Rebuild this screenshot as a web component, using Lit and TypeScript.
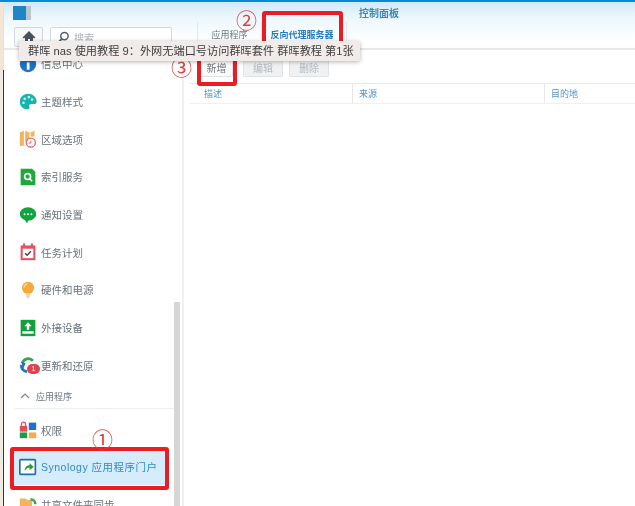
import { LitElement, html, css, svg } from "lit";
import { customElement } from "lit/decorators.js";

const icons: Record<string, unknown> = {
  info: svg`<circle cx="11" cy="11" r="10" fill="#1b74c4"/><rect x="9.500" y="9" width="3.400" height="9" fill="#fff"/>`,
  theme: svg`<path d="M11 1C5 1 1 5.500 1 11s4.500 9 9 9c3 0 3-2 2.500-3.500-.5-2 1-3 3-3h3c2 0 3-1.500 3-3.500C21 5 17 1 11 1z" fill="#16b4ac"/><circle cx="7" cy="7" r="1.600" fill="#cdf2ee"/><circle cx="12" cy="5" r="1.600" fill="#cdf2ee"/><circle cx="16" cy="8" r="1.600" fill="#cdf2ee"/><circle cx="5.500" cy="12" r="1.600" fill="#cdf2ee"/>`,
  region: svg`<path d="M1 3l5-2v18l-5 1zM7.500 1l5 2v7l-5 5zM14 3l5-2v7h-5z" fill="#f6b35f"/><circle cx="14.500" cy="15.500" r="5.500" fill="#fff" stroke="#e2646c" stroke-width="1.600"/><path d="M14.500 13v3h-3" fill="none" stroke="#e2646c" stroke-width="1.200"/>`,
  search: svg`<path d="M2 1h14l4 4v16H2z" fill="#1fa83c"/><circle cx="10.500" cy="10.500" r="3.600" fill="none" stroke="#fff" stroke-width="2"/><path d="M13 13l3 3" stroke="#fff" stroke-width="2"/>`,
  chat: svg`<path d="M11 1.500c5.500 0 10 3.600 10 8.300s-4.500 8.200-10 8.200l-1 3.500-3-4.300C3.500 16 1 13.200 1 9.800 1 5.100 5.500 1.500 11 1.500z" fill="#11a53d"/><circle cx="6.800" cy="10" r="1.200" fill="#fff"/><circle cx="11" cy="10" r="1.200" fill="#fff"/><circle cx="15.200" cy="10" r="1.200" fill="#fff"/>`,
  task: svg`<path d="M2 3h18v18H2z" fill="#e4525f"/><rect x="4.500" y="7" width="13" height="11.500" fill="#fff"/><rect x="5" y="0.500" width="2.400" height="5" fill="#e4525f"/><rect x="14.600" y="0.500" width="2.400" height="5" fill="#e4525f"/><path d="M7.500 12.500l2.500 2.500 4.500-5" fill="none" stroke="#444" stroke-width="1.800"/>`,
  bulb: svg`<circle cx="11" cy="8.500" r="7.500" fill="#f8a93d"/><path d="M8 15h6l-1 3H9z" fill="#f6d08c"/><rect x="9" y="18" width="4" height="3" fill="#d8d8d8"/><path d="M6 8a5 5 0 0 1 4-4.500" stroke="#fcd9a0" stroke-width="1.500" fill="none"/>`,
  device: svg`<rect x="2" y="1" width="18" height="20" fill="#12a03c"/><rect x="4" y="15" width="14" height="3" fill="#fff"/><path d="M11 4l4.500 5h-3v4h-3V9h-3z" fill="#fff"/>`,
  update: svg`<path d="M4 9a7.500 7.500 0 0 1 13-3" fill="none" stroke="#2fa84f" stroke-width="3.400"/><path d="M3 7l2 9 3-7z" fill="#1b74c4"/><path d="M3 11a7 7 0 0 0 7 8" fill="none" stroke="#1b74c4" stroke-width="3.400"/>`,
  perm: svg`<rect x="1" y="6" width="9" height="7" fill="#e84a5a"/><path d="M3 7V4a2.500 2.500 0 0 1 5 0v3" fill="none" stroke="#e84a5a" stroke-width="1.500"/><rect x="12" y="2" width="9" height="9" fill="#1b74c4"/><rect x="1" y="14" width="9" height="7" fill="#1f9a4a"/><rect x="12" y="14" width="9" height="7" fill="#f8aa4b"/>`,
  portal: svg`<rect x="1" y="2" width="19" height="18" rx="1" fill="#fff" stroke="#1b6fb0" stroke-width="2"/><path d="M7 16c0-5 3-7 6-7V6l5 5-5 4v-3c-3 0-4 1-6 4z" fill="#2f9a3c"/>`,
  share: svg`<path d="M1 3h7l2 2h6v12H1z" fill="#f6b35f"/><path d="M14 4a6 6 0 0 1 6 6" fill="none" stroke="#2fa84f" stroke-width="3"/>`,
};

const ic = (name: string) =>
  html`<svg class="ic" viewBox="0 0 22 22" width="18" height="18">${icons[name]}</svg>`;

const items: [string, string][] = [
  ["theme", "主题样式"],
  ["region", "区域选项"],
  ["search", "索引服务"],
  ["chat", "通知设置"],
  ["task", "任务计划"],
  ["bulb", "硬件和电源"],
  ["device", "外接设备"],
];

@customElement("app-root")
export class AppRoot extends LitElement {
  static styles = css`
    :host {
      display: block;
      width: 635px;
      height: 506px;
      overflow: hidden;
      position: relative;
      background: #fff;
      font-family: "Liberation Sans", "Noto Sans CJK SC", sans-serif;
      font-size: 10.500px;
      color: #66717a;
    }
    .shot {
      display: flex;
      height: 100%;
      filter: blur(0.4px);
    }
    .edge {
      width: 4px;
      flex: none;
      background:
        linear-gradient(90deg, #f3e6d4 3px, #dfe3e6 3px) 0 0 / 100% 70px no-repeat,
        linear-gradient(90deg, #efe9df 3px, #3a3632 3px);
    }
    .main {
      flex: 1;
      display: flex;
      flex-direction: column;
      min-width: 0;
    }
    .topline {
      height: 2px;
      background: #0a8ad6;
      margin-left: -4px;
      flex: none;
    }
    .header {
      height: 46px;
      flex: none;
      background: linear-gradient(#cfe9f8 0, #eaf6fc 14px, #fdfeff 36px, #fff);
      border-bottom: 2px solid #e6e8ea;
      display: flex;
    }
    .hleft {
      width: 180px;
      flex: none;
      padding: 0 0 0 9px;
      box-sizing: border-box;
    }
    .logo {
      width: 18px;
      height: 14px;
      margin-top: 4px;
      display: flex;
    }
    .logo i:first-child { width: 13px; background: #1e86c4; }
    .logo i:last-child { width: 5px; background: #b9c6ce; }
    .tools {
      display: flex;
      gap: 7px;
      margin-top: 7px;
      margin-left: 1px;
    }
    .home {
      width: 29px;
      height: 20px;
      box-sizing: border-box;
      border: 1px solid #d4d9dd;
      border-radius: 2px;
      background: #f7f8f9;
      display: flex;
      justify-content: center;
      align-items: center;
    }
    .searchbox {
      width: 122px;
      height: 20px;
      box-sizing: border-box;
      border: 1px solid #d4d9dd;
      border-radius: 2px;
      background: #fff;
      display: flex;
      align-items: center;
      gap: 4px;
      padding-left: 6px;
      color: #aab2b8;
      font-size: 10px;
    }
    .hright {
      flex: 1;
      position: relative;
    }
    .title {
      position: absolute;
      left: 175px;
      top: 3px;
      color: #3f86b8;
      font-weight: 700;
      font-size: 10px;
    }
    .tabs {
      display: flex;
      height: 100%;
      align-items: flex-end;
      padding-left: 13px;
    }
    .tab {
      width: 63px;
      height: 24px;
      padding-bottom: 2px;
      box-sizing: content-box;
      display: flex;
      align-items: center;
      justify-content: center;
      border-right: 1px solid #e4e7e9;
      font-size: 9px;
      color: #6b7780;
    }
    .tab.first { border-left: 1px solid #e4e7e9; }
    .tab.on { width: 80px; padding-right: 4px; color: #1f7cc4; font-weight: 700; }
    .body {
      flex: 1;
      display: flex;
      min-height: 0;
    }
    .side {
      width: 180px;
      flex: none;
      box-sizing: border-box;
      border-right: 2px solid #eef0f1;
      display: flex;
      overflow: hidden;
    }
    .list {
      width: 170px;
      flex: none;
      margin-top: -5px;
    }
    .item {
      height: 37.700px;
      display: flex;
      align-items: center;
      padding-left: 15px;
      white-space: nowrap;
    }
    .ic { flex: none; margin-right: 4px; }
    .badge-wrap { position: relative; display: flex; }
    .badge {
      position: absolute;
      left: 8px;
      bottom: 0;
      width: 13px;
      height: 10px;
      border-radius: 5px;
      background: #e6404c;
      color: #fff;
      font-size: 7px;
      line-height: 10px;
      text-align: center;
    }
    .section {
      height: 25px;
      box-sizing: border-box;
      margin: 0 0 2px 10px;
      display: flex;
      align-items: center;
      gap: 6px;
      padding-left: 6px;
      font-size: 9px;
      border-bottom: 1px solid #eceff1;
      color: #6a7680;
    }
    .item.sel {
      background: #d5ecfa;
      color: #2e8ccb;
      margin: 0 0 1px 7px;
      padding-left: 8px;
      letter-spacing: 0.5px;
      width: 156px;
      box-sizing: border-box;
      height: 36px;
    }
    .thumb {
      width: 6px;
      flex: none;
      margin-top: 252px;
      background: #d6d6d6;
    }
    .content {
      flex: 1;
      min-width: 0;
    }
    .buttons {
      display: flex;
      gap: 6px;
      padding: 7px 0 0 14px;
      height: 26px;
    }
    .btn {
      width: 40px;
      height: 20px;
      box-sizing: border-box;
      border: 1px solid #dfe3e5;
      background: #f6f7f8;
      color: #8f99a1;
      font-size: 10px;
      display: flex;
      align-items: center;
      justify-content: center;
      border-radius: 1px;
    }
    .btn.dis { color: #b3babf; background: #eff1f2; }
    .btn.add { color: #6b7780; width: 35px; padding-left: 2px; margin-right: 4px; background: #fbfbfb; }
    .thead {
      height: 21px;
      box-sizing: border-box;
      margin-left: 6px;
      border-top: 1px solid #e6e8ea;
      border-bottom: 1px solid #eef0f1;
      display: grid;
      grid-template-columns: 162px 192px 1fr;
      color: #4f93c7;
      font-size: 9px;
      align-items: center;
    }
    .thead span { padding-left: 6px; height: 100%; display: flex; align-items: center; }
    .thead span:first-child { padding-left: 14px; }
    .thead span + span { border-left: 1px solid #e6e8ea; }
    .tip {
      position: absolute;
      left: 19px;
      top: 41px;
      height: 20px;
      width: 341px;
      box-sizing: border-box;
      background: #f1ebe9;
      border-radius: 2px;
      box-shadow: 0 1px 4px rgba(0, 0, 0, 0.3);
      color: #3d3d3d;
      font-size: 11.200px;
      line-height: 20px;
      padding-left: 9px;
      white-space: nowrap;
    }
    .mark {
      position: absolute;
      border: 4px solid #ec1c24;
      border-radius: 3px;
      box-sizing: border-box;
    }
    .num {
      position: absolute;
      color: #d9443c;
      font-size: 21px;
      line-height: 1;
      font-family: "Noto Sans CJK SC", sans-serif;
    }
  `;

  render() {
    return html`
      <div class="shot">
        <div class="edge"></div>
        <div class="main">
          <div class="topline"></div>
          <div class="header">
            <div class="hleft">
              <div class="logo"><i></i><i></i></div>
              <div class="tools">
                <div class="home">
                  <svg viewBox="0 0 14 14" width="14" height="14"><path d="M7 1L0.500 7.500 2 8.500l1-1V13h3V9h2v4h3V7.500l1 1 1.500-1z" fill="#48525a"/></svg>
                </div>
                <div class="searchbox">
                  <svg viewBox="0 0 14 14" width="13" height="13"><circle cx="8" cy="5.500" r="4" fill="none" stroke="#55606a" stroke-width="1.600"/><path d="M5 8.500L1.500 12.500" stroke="#55606a" stroke-width="2"/></svg>
                  搜索
                </div>
              </div>
            </div>
            <div class="hright">
              <div class="title">控制面板</div>
              <div class="tabs">
                <div class="tab first">应用程序</div>
                <div class="tab on">反向代理服务器</div>
              </div>
            </div>
          </div>
          <div class="body">
            <div class="side">
              <div class="list">
                <div class="item">${ic("info")}信息中心</div>
                ${items.map(([i, t]) => html`<div class="item">${ic(i)}${t}</div>`)}
                <div class="item">
                  <span class="badge-wrap">${ic("update")}<span class="badge">1</span></span>更新和还原
                </div>
                <div class="section">
                  <svg viewBox="0 0 10 6" width="10" height="6"><path d="M1 5l4-4 4 4" fill="none" stroke="#7d8891" stroke-width="1.200"/></svg>
                  应用程序
                </div>
                <div class="item">${ic("perm")}权限</div>
                <div class="item sel">${ic("portal")}Synology 应用程序门户</div>
                <div class="item">${ic("share")}共享文件夹同步</div>
              </div>
              <div class="thumb"></div>
            </div>
            <div class="content">
              <div class="buttons">
                <div class="btn add">新增</div>
                <div class="btn dis">编辑</div>
                <div class="btn dis">删除</div>
              </div>
              <div class="thead"><span>描述</span><span>来源</span><span>目的地</span></div>
            </div>
          </div>
        </div>
        <div class="mark" style="left:262px;top:11px;width:81px;height:37px"></div>
        <div class="mark" style="left:197px;top:48px;width:40px;height:38px"></div>
        <div class="mark" style="left:10px;top:447px;width:159px;height:43px"></div>
        <span class="num" style="left:236px;top:9px">②</span>
        <span class="num" style="left:171px;top:56px">③</span>
        <span class="num" style="left:92px;top:428px">①</span>
        <div class="tip">群晖 nas 使用教程 9：外网无端口号访问群晖套件 群晖教程 第1张</div>
      </div>
    `;
  }
}
